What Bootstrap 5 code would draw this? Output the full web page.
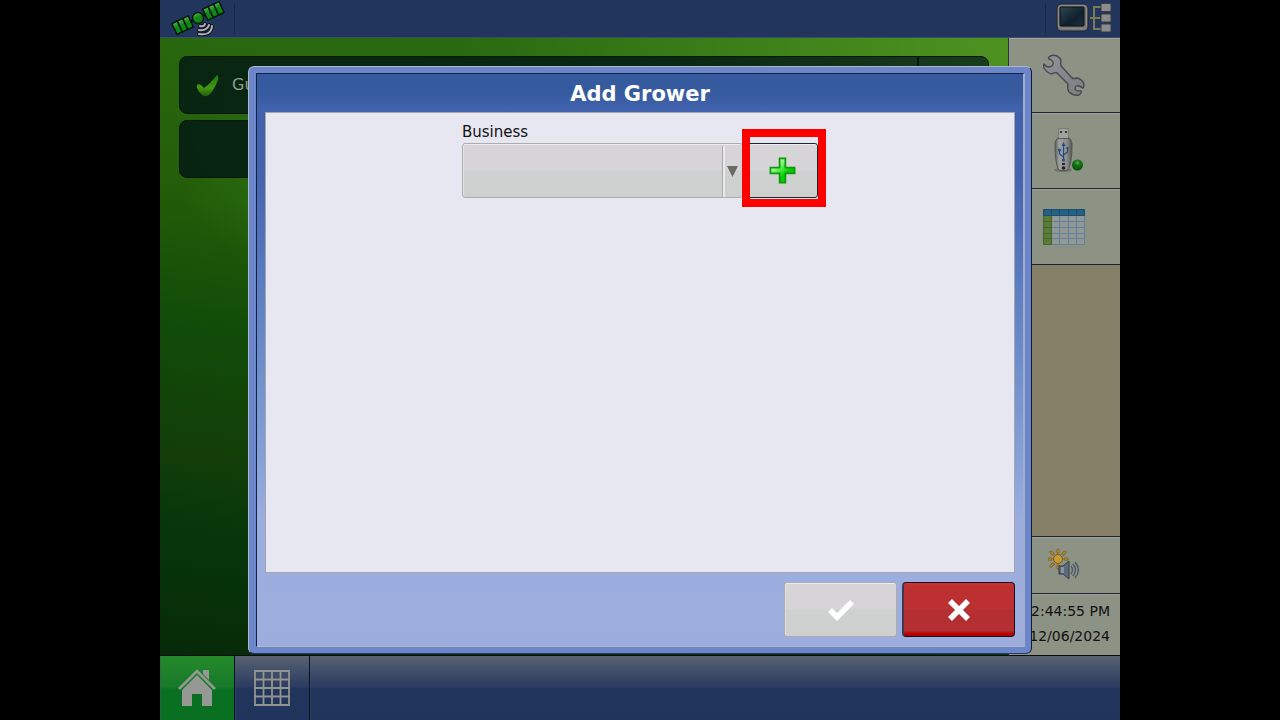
<!DOCTYPE html>
<html lang="en">
<head>
<meta charset="utf-8">
<meta name="viewport" content="width=device-width, initial-scale=1">
<title>Add Grower</title>
<link href="https://cdn.jsdelivr.net/npm/bootstrap@5.3.0/dist/css/bootstrap.min.css" rel="stylesheet">
<style>
  body { background: #000; font-family: "DejaVu Sans", sans-serif; font-size: 15px; line-height: 20px; color: #111; }
  button { padding: 0; }

  .top-strip { height: 38px; background: #21355d; border-bottom: 1px solid #3a4d68; }
  .top-cell { width: 75px; padding-left: 10px; border-right: 1px solid #19294b; height: 31px; }
  .top-cell.end { padding-left: 10px; border-right: 0; border-left: 1px solid #19294b; }

  .field-view {
    padding: 18px 19px;
    background:
      linear-gradient(90deg, rgba(112, 185, 45, 0) 35%, rgba(112, 185, 45, .5) 100%) top / 100% 30% no-repeat,
      radial-gradient(circle at 110px 130px, rgba(45, 125, 30, .4) 0, transparent 90px),
      linear-gradient(190deg, #2a6c14 0%, #29680e 20%, #235c08 40%, #114c09 56%, #133e09 73%, #07370a 82%, #062a08 100%);
  }
  .status-row { height: 58px; background: rgba(5, 32, 18, .92); border: 1px solid #06170f; border-radius: 8px; color: #8f9b93; font-size: 16px; }
  .status-row.first { background: linear-gradient(90deg, rgba(5, 32, 18, .92) 60%, rgba(18, 48, 28, .88)); }
  .status-row + .status-row { margin-top: 6px; }
  .status-end { width: 71px; border-left: 2px solid #06170f; }

  .side-menu { width: 112px; background: #857f68; border-left: 1px solid #2c3648; }
  .side-key { height: 76px; background: #8c9384; border: 0; border-bottom: 1px solid #1b2234; box-shadow: inset 0 1px #a0a597; padding-left: 34px; text-align: left; }
  .side-key.tall { height: 75px; }
  .side-key.low { height: 58px; border-top: 1px solid #1b2234; padding-left: 39px; }
  .clock-box { height: 61px; background: #8c9384; padding: 5px 10px 0 0; font-size: 14px; line-height: 25px; box-shadow: inset 0 1px #a0a597; }

  .bottom-strip { height: 65px; border-top: 1px solid #070b14; background: linear-gradient(#586272 0, #3d4b67 28%, #2b3b60 49%, #21355d 50%, #20345c 100%); }
  .nav-key { width: 75px; border: 0; border-right: 1px solid #0b1220; background: transparent; box-shadow: inset 1px 0 #46546d55; }
  .nav-key.home { background: linear-gradient(#268a2b 0, #17792a 48%, #087020 52%, #087020 100%); }

  .dialog-layer { padding: 66px 88px; z-index: 5; }
  .dialog-frame { background: #6b86ca; border: 1px solid #b0b6c4; border-right-color: #111b33; border-bottom-color: #283861; border-radius: 6px; padding: 6px 6px 6px 7px; }
  .dialog-core {
    border: 1px solid #14213f; border-right: 2px solid #a5aec9; border-bottom: 1px solid #b2b6c6; padding: 0 8px 9px;
    background: linear-gradient(#365b9f 0, #3a60ac 4%, #4160ac 7%, #4464b0 18%, #6285c6 43%, #86a2da 68%, #9baddf 78%, #9daede 100%);
  }
  .dialog-title { height: 38px; line-height: 40px; font-size: 21px; font-weight: 700; color: #fff; background: linear-gradient(#365a9e 0 50%, #4062ad 90%); margin: 0 -8px; }
  .dialog-sheet { background: #e6e7f0; border: 1px solid #a5a6aa; padding-top: 9px; }
  .business-group { width: 356px; margin-left: 196px; }
  .business-group label { margin-bottom: 1px; }
  .soft-face { background: linear-gradient(#d8d5d8 0, #d5d4d6 48%, #cfd0d0 52%, #cecfcf 100%); border: 1px solid #adadad; border-radius: 3px; box-shadow: inset 0 1px #ebebee, inset 1px 0 #e1e1e3; }
  .business-select { height: 55px; appearance: none; }
  .select-mark { top: 3px; bottom: 1px; right: 0; width: 21px; border-left: 1px solid #ababab; box-shadow: inset 2px 0 #e9e9ec; padding-left: 4px; pointer-events: none; }
  .plus-key { width: 71px; height: 55px; border-color: #20252d; }
  .callout { top: -14px; bottom: -9px; left: -5px; right: -8px; border: 8px solid #f00; pointer-events: none; }
  .dialog-actions { padding-top: 9px; gap: 5px; }
  .act-key { width: 113px; height: 55px; }
  .cancel-key { border: 1px solid #1d1014; border-left: 2px solid #40384e; border-radius: 4px; background: linear-gradient(#c93333 0, #bd3032 6%, #bd3032 49%, #b32f32 51%, #b32f32 90%, #b40000 96%); }
</style>
</head>
<body>
<div class="row g-0 justify-content-center">
<div class="col-9 position-relative min-vh-100 d-flex flex-column overflow-hidden">

  <header class="top-strip d-flex justify-content-between align-items-center">
    <div class="top-cell d-flex align-items-center">
      <svg width="56" height="38" viewBox="0 0 56 38" aria-hidden="true">
        <defs>
          <linearGradient id="sat" x1="0" y1="0" x2="0" y2="1"><stop offset="0" stop-color="#58ad50"/><stop offset=".45" stop-color="#12851a"/><stop offset="1" stop-color="#0a8a10"/></linearGradient>
        </defs>
        <g transform="rotate(-25 28 18)" fill="url(#sat)" stroke="#04160a" stroke-width="1.4">
          <path d="M18 18h20" stroke-width="2"/>
          <rect x="2" y="12" width="6" height="12"/><rect x="8" y="12" width="6" height="12"/><rect x="14" y="12" width="6" height="12"/>
          <rect x="36" y="12" width="6" height="12"/><rect x="42" y="12" width="6" height="12"/><rect x="48" y="12" width="6" height="12"/>
          <circle cx="28" cy="18" r="5.5"/>
        </g>
        <g fill="none" stroke-linecap="round">
          <g stroke="#111722" stroke-width="4"><path d="M30 26q4 1 5-2"/><path d="M29 30q8 1 10-5"/><path d="M29 34q12 2 13-8"/></g>
          <g stroke="#b0b2b5" stroke-width="2"><path d="M30 26q4 1 5-2"/><path d="M29 30q8 1 10-5"/><path d="M29 34q12 2 13-8"/></g>
        </g>
      </svg>
    </div>
    <div class="top-cell end d-flex align-items-center">
      <svg width="56" height="32" viewBox="0 0 56 32" aria-hidden="true">
        <defs><linearGradient id="scr" x1="0" y1="0" x2="1" y2="1"><stop offset="0" stop-color="#2d4653"/><stop offset=".6" stop-color="#10212d"/><stop offset="1" stop-color="#1b303c"/></linearGradient></defs>
        <rect x="1" y="1" width="31" height="27" rx="4" fill="#727475" stroke="#25282e"/>
        <rect x="2.500" y="2.500" width="28" height="23" rx="3" fill="none" stroke="#8a8b8a"/>
        <rect x="4" y="4" width="24" height="19" rx="1" fill="url(#scr)" stroke="#0d1115"/>
        <path d="M34 15h10M45 4h-7v22h7" fill="none" stroke="#7b7c51" stroke-width="2"/>
        <g fill="#8b8c8b" stroke="#3a3d42"><rect x="45" y="0.500" width="10" height="8" rx="1"/><rect x="45" y="11" width="10" height="8" rx="1"/><rect x="45" y="21" width="10" height="8" rx="1"/></g>
      </svg>
    </div>
  </header>

  <main class="d-flex flex-fill">
    <section class="field-view flex-fill d-flex flex-column">
      <div class="status-row first d-flex align-items-center justify-content-between">
        <div class="d-flex align-items-center">
          <svg class="ms-3 me-2" width="24" height="24" viewBox="0 0 24 24" aria-hidden="true"><defs><linearGradient id="chk" x1="0" y1="0" x2="0" y2="1"><stop offset="0" stop-color="#1c7911"/><stop offset=".6" stop-color="#459711"/><stop offset="1" stop-color="#205b0f"/></linearGradient></defs><path transform="translate(0 3)" d="M1 12Q0 8 3 8Q6 9 8 12Q14 8 21 -1Q23 0 22 4Q18 14 14 18Q10 22 6 19Q3 17 1 12Z" fill="url(#chk)"/></svg>
          <span class="ms-1">Gu</span>
        </div>
        <div class="status-end h-100"></div>
      </div>
      <div class="status-row"></div>
    </section>

    <nav class="side-menu d-flex flex-column" aria-label="Tools">
      <button class="side-key tall" aria-label="Setup">
        <svg width="44" height="44" viewBox="0 0 44 44" aria-hidden="true"><defs><linearGradient id="wr" x1="0" y1="0" x2="1" y2="1"><stop offset="0" stop-color="#8f9397"/><stop offset="1" stop-color="#7a7e82"/></linearGradient></defs>
          <path d="M6 4Q9 1 14 3Q18 5 18 9Q17 12 19 14L29 25Q31 26 34 25Q39 26 41 31Q41 34 40 35L36 33Q32 32 32 36Q33 38 38 38Q39 40 36 42Q30 43 26 39Q24 35 25 31L14 20Q12 19 9 21Q4 20 1 15Q0 12 1 11Q3 14 6 14Q11 13 10 9Q9 7 6 6Q5 5 6 4Z" fill="url(#wr)" stroke="#454b51" stroke-width="1.4" stroke-linejoin="round"/></svg>
      </button>
      <button class="side-key" aria-label="USB drive">
        <svg width="44" height="50" viewBox="0 0 44 50" aria-hidden="true"><defs><linearGradient id="usb"><stop offset="0" stop-color="#595b59"/><stop offset=".25" stop-color="#a1a2a0"/><stop offset=".7" stop-color="#8b8c8a"/><stop offset="1" stop-color="#555653"/></linearGradient><radialGradient id="dot" cx=".5" cy=".3" r=".7"><stop offset="0" stop-color="#63a954"/><stop offset=".35" stop-color="#177517"/><stop offset="1" stop-color="#044e07"/></radialGradient></defs>
          <ellipse cx="20" cy="44" rx="9" ry="2" fill="#6f746b"/>
          <rect x="15.500" y="2.500" width="10" height="11" fill="#a0a29f" stroke="#777a76"/><path d="M17 5h2v2h-2zM22 5h2v2h-2z" fill="#343635"/>
          <path d="M14 12.500h13l2 4c0 9 0 17-3 26q-1 2-3 2h-5q-2 0-3-2c-3-9-3-17-3-26Z" fill="url(#usb)" stroke="#555753"/>
          <path d="M20.500 35V19M20.500 31l-4-3v-4M20.500 29l4-3v-4" fill="none" stroke="#234c83" stroke-width="1.2"/><path d="M18.500 20l2-4 2 4zM23.500 21h2v2h-2z" fill="#234c83"/><circle cx="16.500" cy="24" r="1.5" fill="#234c83"/><circle cx="20.500" cy="34" r="1.500" fill="#234c83"/>
          <path d="M19 37h3v2h-3z" fill="#292a29"/><circle cx="20.500" cy="42" r="1.800" fill="#222"/>
          <circle cx="34.500" cy="39" r="5.500" fill="url(#dot)"/></svg>
      </button>
      <button class="side-key" aria-label="Data table">
        <svg width="42" height="36" viewBox="0 0 42 36" aria-hidden="true"><path fill="#919896" d="M0 0h42v36H0z"/><path fill="#266183" d="M0 0h42v7H0z"/><path fill="#5b7b3b" d="M0 7h9v29H0z"/>
          <path d="M9 12.500h33M9 18.500h33M9 24.500h33M9 29.500h33M16.500 7v29M25.500 7v29M33.500 7v29M9 35.500h32.500V7" fill="none" stroke="#62809b"/>
          <path d="M.5 7v28.500H9M8.500 7v29M0 12.500h9M0 18.500h9M0 24.500h9M0 29.500h9" fill="none" stroke="#426829"/>
          <path d="M.5 .5h41v6H.5zM8.500 0v7M16.500 0v7M25.500 0v7M33.500 0v7" fill="none" stroke="#194e6d"/></svg>
      </button>
      <button class="side-key low mt-auto" aria-label="Brightness and volume">
        <svg width="32" height="34" viewBox="0 0 32 34" aria-hidden="true">
          <path d="M10 2v2M10 18v2M1 11h2M17 11h2M3 4l2 2M15 6l2-2M3 18l2-2" stroke="#775b1d" stroke-width="3" stroke-linecap="round"/>
          <path d="M10 2v2M10 18v2M1 11h2M17 11h2M3 4l2 2M15 6l2-2M3 18l2-2" stroke="#bd8a28" stroke-width="1.600" stroke-linecap="round"/>
          <circle cx="10" cy="11" r="4.500" fill="#c89a32" stroke="#775b1d"/>
          <path d="M11 18h4l6-5v18l-6-5h-4z" fill="#5d6b79" stroke="#303b48"/><path d="M13 19h3v6h-3z" fill="#8595a3"/>
          <path d="M23 18q3 4 0 8M25 16q5 6 0 12M27 14q7 8 0 16" fill="none" stroke="#46586b" stroke-width="1.300"/></svg>
      </button>
      <div class="clock-box text-end text-nowrap d-flex flex-column align-items-end">
        <span>12:44:55 PM</span><span>12/06/2024</span>
      </div>
    </nav>
  </main>

  <footer class="bottom-strip d-flex">
    <button class="nav-key home d-flex align-items-center justify-content-center" aria-label="Home">
      <svg width="38" height="38" viewBox="0 0 38 38" aria-hidden="true"><path d="M25 1h6v10l-6-6z" fill="#969894"/><path d="M1 20L19 2l18 18" fill="none" stroke="#969894" stroke-width="2.600"/><path d="M19 6L34 21V37H24V25H14V37H4V21Z" fill="#969894"/></svg>
    </button>
    <button class="nav-key d-flex align-items-center justify-content-center" aria-label="Page layout">
      <svg width="36" height="36" viewBox="0 0 36 36" aria-hidden="true"><path d="M1 1h34v34H1zM9.500 0v36M18 0v36M26.500 0v36M0 9.500h36M0 18h36M0 26.500h36" fill="none" stroke="#91948f" stroke-width="1.800"/></svg>
    </button>
    <div class="nav-key flex-fill border-end-0"></div>
  </footer>

  <div class="dialog-layer position-absolute top-0 start-0 w-100 h-100 d-flex">
    <div class="dialog-frame flex-fill d-flex" role="dialog" aria-labelledby="dialogTitle">
      <div class="dialog-core flex-fill d-flex flex-column">
        <h1 class="dialog-title text-center" id="dialogTitle">Add Grower</h1>
        <div class="dialog-sheet flex-fill">
          <div class="business-group">
            <label class="d-block" for="business">Business</label>
            <div class="d-flex gap-1">
              <div class="position-relative flex-fill">
                <select class="business-select soft-face w-100 d-block" id="business"><option></option></select>
                <span class="select-mark position-absolute d-flex align-items-center"><svg width="11" height="11" viewBox="0 0 11 11" aria-hidden="true"><path d="M0 0h11L5.500 11z" fill="#6b6b63"/></svg></span>
              </div>
              <div class="position-relative">
                <button class="plus-key soft-face d-flex align-items-center justify-content-center" aria-label="Add business">
                  <svg width="27" height="27" viewBox="0 0 28 28" aria-hidden="true"><defs><linearGradient id="pl" x1="0" y1="0" x2="1" y2="1"><stop offset=".2" stop-color="#c2ffb4"/><stop offset=".5" stop-color="#35e52c"/><stop offset=".65" stop-color="#00c900"/><stop offset="1" stop-color="#0be00b"/></linearGradient></defs><path d="M11 1.500h6V11h9.500v6H17v9.500h-6V17H1.500v-6H11z" fill="url(#pl)" stroke="#0a9a0a" stroke-width="1.800"/></svg>
                </button>
                <span class="callout position-absolute"></span>
              </div>
            </div>
          </div>
        </div>
        <div class="dialog-actions d-flex justify-content-end">
          <button class="act-key soft-face d-flex align-items-center justify-content-center" aria-label="Accept" disabled>
            <svg width="28" height="22" viewBox="0 0 28 22" aria-hidden="true"><path d="M3 11l7 7L25 3" fill="none" stroke="#fff" stroke-width="5.500"/></svg>
          </button>
          <button class="act-key cancel-key d-flex align-items-center justify-content-center" aria-label="Cancel">
            <svg width="24" height="24" viewBox="0 0 24 24" aria-hidden="true"><path d="M3 3l18 18M21 3L3 21" fill="none" stroke="#fff" stroke-width="5.500"/></svg>
          </button>
        </div>
      </div>
    </div>
  </div>

</div>
</div>
<script src="https://cdn.jsdelivr.net/npm/bootstrap@5.3.0/dist/js/bootstrap.bundle.min.js"></script>
</body>
</html>
